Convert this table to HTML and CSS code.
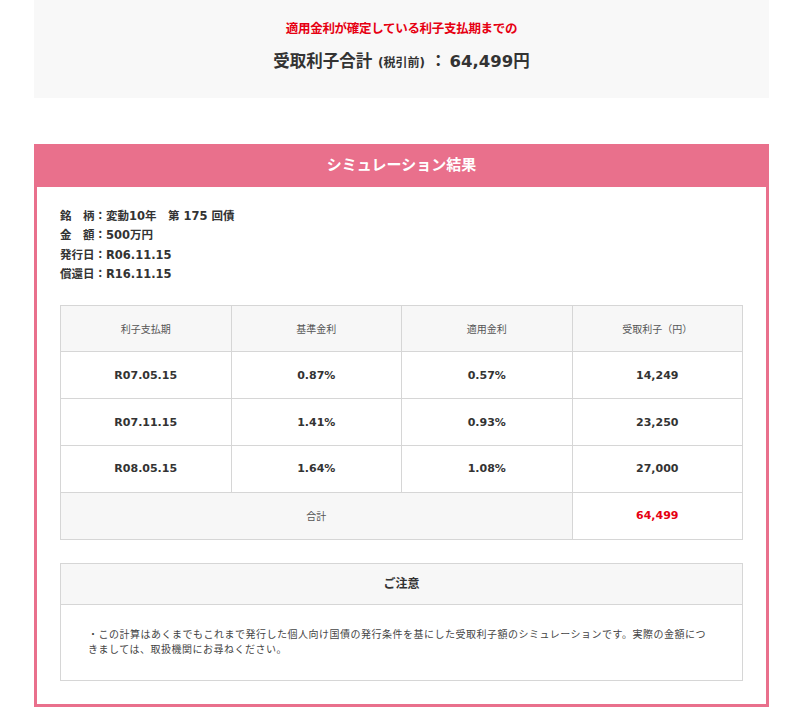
FILE: index.html
```html
<!DOCTYPE html>
<html lang="ja">
<head>
<meta charset="utf-8">
<title>シミュレーション結果</title>
<link rel="stylesheet" href="styles.css">
</head>
<body>
<div class="page">
  <section class="summary">
    <p class="summary-note">適用金利が確定している利子支払期までの</p>
    <p class="summary-total">受取利子合計 <span class="summary-small">(税引前)</span><span class="summary-colon">：</span>64,499円</p>
  </section>

  <section class="result">
    <h2 class="result-title">シミュレーション結果</h2>
    <div class="result-body">
      <ul class="info">
        <li>銘　柄：変動10年　第 175 回債</li>
        <li>金　額：500万円</li>
        <li>発行日：R06.11.15</li>
        <li>償還日：R16.11.15</li>
      </ul>

      <table class="rates">
        <thead>
          <tr>
            <th>利子支払期</th>
            <th>基準金利</th>
            <th>適用金利</th>
            <th>受取利子（円）</th>
          </tr>
        </thead>
        <tbody>
          <tr><td>R07.05.15</td><td>0.87%</td><td>0.57%</td><td>14,249</td></tr>
          <tr><td>R07.11.15</td><td>1.41%</td><td>0.93%</td><td>23,250</td></tr>
          <tr><td>R08.05.15</td><td>1.64%</td><td>1.08%</td><td>27,000</td></tr>
          <tr class="total"><th colspan="3">合計</th><td class="total-value">64,499</td></tr>
        </tbody>
      </table>

      <div class="notice">
        <h3 class="notice-title">ご注意</h3>
        <p class="notice-text">・この計算はあくまでもこれまで発行した個人向け国債の発行条件を基にした受取利子額のシミュレーションです。実際の金額につきましては、取扱機関にお尋ねください。</p>
      </div>
    </div>
  </section>
</div>
</body>
</html>
```

FILE: styles.css
```css
* { box-sizing: border-box; }

body {
  margin: 0;
  background: #fff;
  color: #333;
  font-family: "DejaVu Sans", "Noto Sans CJK JP", sans-serif;
}

.page {
  width: 735px;
  margin-left: 34px;
}

.summary {
  background: #f8f8f8;
  height: 98px;
  padding-top: 19px;
  text-align: center;
}

.summary-note {
  margin: 0;
  color: #e60012;
  font-size: 12.5px;
  font-weight: bold;
  line-height: 20px;
  letter-spacing: -0.3px;
}

.summary-total {
  margin: 11px 0 0;
  font-size: 16.5px;
  font-weight: bold;
  line-height: 24px;
  color: #333;
}

.summary-small {
  font-size: 12px;
}

.summary-colon {
  margin: 0 3px 0 5px;
}

.result {
  margin-top: 46px;
  border: 3px solid #e9708c;
  border-top: 0;
}

.result-title {
  margin: 0 -3px;
  height: 43px;
  background: #e9708c;
  color: #fff;
  font-size: 15px;
  font-weight: bold;
  line-height: 43px;
  text-align: center;
}

.result-body {
  padding: 20px 23px 23px;
}

.info {
  list-style: none;
  margin: 0;
  padding: 0;
  font-size: 11.5px;
  font-weight: bold;
  line-height: 19.4px;
  color: #333;
}

.rates {
  width: 100%;
  margin-top: 20px;
  border-collapse: collapse;
  table-layout: fixed;
  font-size: 11px;
  text-align: center;
}

.rates th,
.rates td {
  border: 1px solid #d6d6d6;
  height: 46.8px;
  padding: 0;
}

.rates th {
  background: #f7f7f7;
  font-weight: normal;
  font-size: 10px;
  color: #555;
}

.rates td {
  font-weight: bold;
  color: #333;
}

.rates .total-value {
  color: #e60012;
}

.notice {
  margin-top: 23px;
  border: 1px solid #d6d6d6;
}

.notice-title {
  margin: 0;
  height: 41px;
  background: #f7f7f7;
  border-bottom: 1px solid #d6d6d6;
  font-size: 12px;
  font-weight: bold;
  line-height: 40px;
  text-align: center;
  color: #333;
}

.notice-text {
  margin: 0;
  padding: 22px 27px 22px 27px;
  font-size: 10px;
  letter-spacing: 0.5px;
  line-height: 15.5px;
  color: #444;
}
```
